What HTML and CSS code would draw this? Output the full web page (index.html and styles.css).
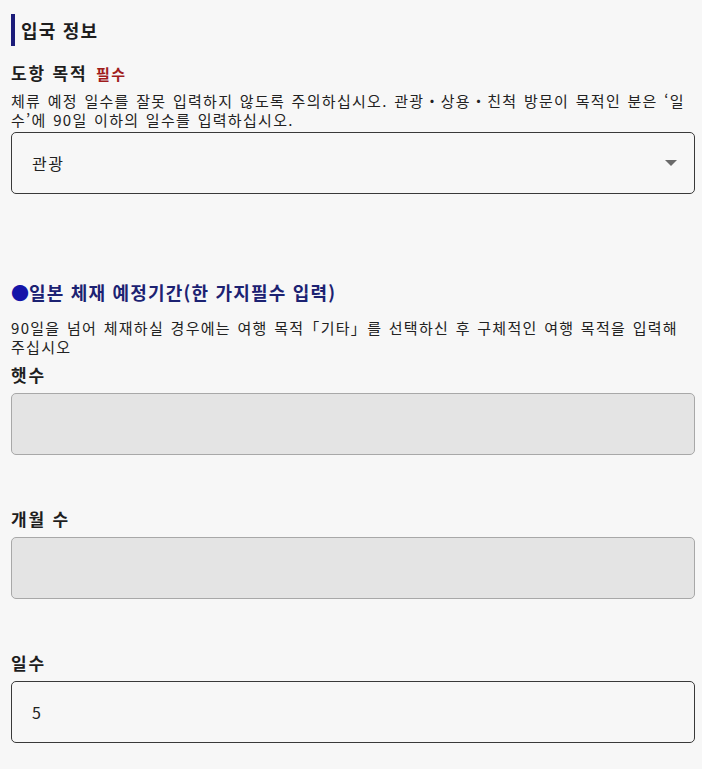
FILE: index.html
```html
<!DOCTYPE html>
<html lang="ko">
<head>
<meta charset="utf-8">
<link rel="stylesheet" href="styles.css">
</head>
<body>
<main class="page">
  <h2 class="section-title">입국 정보</h2>

  <div class="field field-purpose">
    <div class="label">도항 목적 <span class="req">필수</span></div>
    <p class="desc">체류 예정 일수를 잘못 입력하지 않도록 주의하십시오. 관광・상용・친척 방문이 목적인 분은 ‘일수’에 90일 이하의 일수를 입력하십시오.</p>
    <div class="select">
      <span>관광</span>
      <svg class="arrow" width="12" height="6" viewBox="0 0 12 6"><path d="M0 0H12L6 6Z" fill="#6a6a6a"/></svg>
    </div>
  </div>

  <h3 class="sub-title"><span class="dot">●</span>일본 체재 예정기간(한 가지필수 입력)</h3>
  <p class="desc desc-stay">90일을 넘어 체재하실 경우에는 여행 목적「기타」를 선택하신 후 구체적인 여행 목적을 입력해 주십시오</p>

  <div class="field">
    <div class="label">햇수</div>
    <div class="input disabled"></div>
  </div>

  <div class="field field-gap">
    <div class="label">개월 수</div>
    <div class="input disabled"></div>
  </div>

  <div class="field field-gap">
    <div class="label">일수</div>
    <div class="input">5</div>
  </div>
</main>
</body>
</html>
```

FILE: styles.css
```css
html, body {
  margin: 0;
  padding: 0;
  background: #f7f7f7;
}
body {
  font-family: "Noto Sans CJK KR", "Noto Sans", sans-serif;
  color: #1e1e1e;
}
.page {
  padding: 14px 7px 0 11px;
}
.section-title {
  margin: 0;
  border-left: 4px solid #1c1c7a;
  padding-left: 6px;
  height: 32px;
  line-height: 32px;
  font-size: 18px;
  font-weight: 700;
  color: #1e1e1e;
  letter-spacing: 1.2px;
}
.field-purpose {
  margin-top: 15px;
}
.label {
  font-size: 17px;
  font-weight: 700;
  line-height: 24px;
  height: 24px;
  color: #1e1e1e;
  letter-spacing: 1.8px;
}
.req {
  color: #a01c1c;
  font-size: 15px;
  font-weight: 700;
  margin-left: 2px;
  letter-spacing: 1.5px;
}
.desc {
  margin: 6px 0 0;
  font-size: 15px;
  line-height: 19px;
  color: #222;
  letter-spacing: 1.3px;
  word-spacing: 1px;
}
.select {
  margin-top: 3px;
  height: 62px;
  box-sizing: border-box;
  border: 1.5px solid #3a3a3a;
  border-radius: 5px;
  display: flex;
  align-items: center;
  justify-content: space-between;
  padding: 0 17px 0 20px;
  font-size: 16px;
  letter-spacing: 1.5px;
  color: #222;
}
.arrow {
  display: block;
}
.sub-title {
  margin: 86px 0 0;
  font-size: 18px;
  font-weight: 700;
  line-height: 24px;
  color: #1c2272;
  letter-spacing: 1.2px;
}
.dot {
  color: #1515a8;
  letter-spacing: 0;
}
.desc-stay {
  margin-top: 14px;
  word-break: keep-all;
}
.field {
  display: flex;
  flex-direction: column;
}
.desc-stay + .field {
  margin-top: 7px;
}
.field .label {
  margin-bottom: 6px;
}
.field-purpose .label {
  margin-bottom: 0;
}
.field-gap {
  margin-top: 52px;
}
.input {
  height: 62px;
  box-sizing: border-box;
  border: 1.5px solid #3a3a3a;
  border-radius: 5px;
  display: flex;
  align-items: center;
  padding-left: 20px;
  font-size: 16px;
  color: #222;
}
.input.disabled {
  background: #e4e4e4;
  border-color: #a8a8a8;
}
```
